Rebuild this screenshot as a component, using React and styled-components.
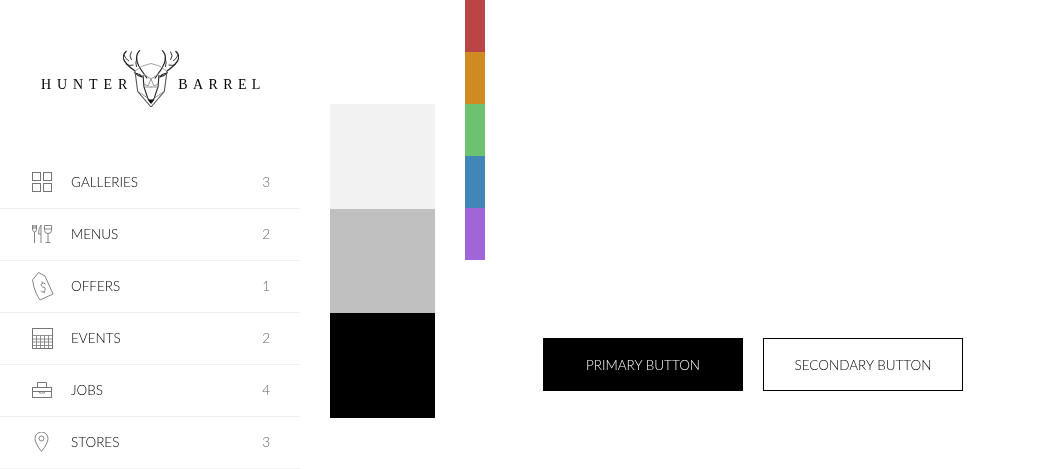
import React from 'react';
import styled, { createGlobalStyle } from 'styled-components';

const GlobalStyle = createGlobalStyle`
  html, body {
    margin: 0;
    padding: 0;
    background: #fff;
    font-family: Lato, "Open Sans", sans-serif;
    font-weight: 300;
  }
`;

const Page = styled.div`
  display: flex;
  align-items: flex-start;
  width: 1054px;
  height: 469px;
  overflow: hidden;
  will-change: transform;
`;

const Sidebar = styled.aside`
  width: 300px;
  flex-shrink: 0;
`;

const LogoWrap = styled.div`
  height: 157px;
  display: flex;
  align-items: flex-start;
  padding: 50px 0 0 41px;
  box-sizing: border-box;
`;

const LogoWord = styled.span`
  font-family: "Liberation Serif", serif;
  font-weight: 400;
  font-size: 14px;
  line-height: 16px;
  letter-spacing: ${props => props.spacing}px;
  color: #000;
  margin-top: 27px;
  white-space: nowrap;
`;

const Deer = styled.svg`
  width: 56px;
  height: 58px;
  margin: 0 -1px 0 -10px;
  flex-shrink: 0;
`;

const NavList = styled.ul`
  list-style: none;
  margin: 0;
  padding: 0;
`;

const NavRow = styled.li`
  height: 52px;
  box-sizing: border-box;
  border-bottom: 1px solid #f0f0f0;
  padding: 0 30px 1px 32px;
  display: flex;
  align-items: center;
`;

const IconSlot = styled.span`
  width: 39px;
  height: 32px;
  flex-shrink: 0;
  display: flex;
  align-items: center;
  color: #767676;
`;

const NavLabel = styled.span`
  flex: 1;
  font-size: 13.5px;
  color: #000;
`;

const NavCount = styled.span`
  font-size: 13.5px;
  color: #666;
`;

const Swatches = styled.div`
  margin: 104px 0 0 30px;
  width: 105px;
  flex-shrink: 0;
`;

const Swatch = styled.div`
  height: ${props => props.h}px;
  background: ${props => props.color};
`;

const Stripes = styled.div`
  margin-left: 30px;
  width: 20px;
  flex-shrink: 0;
`;

const Stripe = styled.div`
  height: 52px;
  background: ${props => props.color};
`;

const Buttons = styled.div`
  display: flex;
  gap: 20px;
  margin: 338px 0 0 58px;
`;

const Button = styled.button`
  width: 200px;
  height: 53px;
  box-sizing: border-box;
  border: 1px solid #000;
  border-radius: 0;
  padding: 0;
  background: ${props => props.primary ? '#000' : '#fff'};
  color: ${props => props.primary ? '#fff' : '#000'};
  font-family: inherit;
  font-weight: 300;
  font-size: 13.5px;
`;

const GridIcon = () => (
  <svg width="20" height="20" viewBox="0 0 20 20" fill="none" stroke="currentColor">
    <rect x="0.5" y="0.5" width="8" height="8" />
    <rect x="11.5" y="0.5" width="8" height="8" />
    <rect x="0.5" y="11.5" width="8" height="8" />
    <rect x="11.5" y="11.5" width="8" height="8" />
  </svg>
);

const MenuIcon = () => (
  <svg width="20" height="18" viewBox="0 0 20 18" fill="none" stroke="currentColor" strokeWidth="0.9">
    <path d="M0.5 0v4q0 2.500 2 3t2-3V0M1.800 0v4M3.200 0v4M2.500 7v11" />
    <path d="M9 18V0q-2.500 3-2.500 9H9" />
    <path d="M12.500 .5h7v5q0 3-3.500 3t-3.500-3zM12.500 4h7M16 8.500V17M13.500 17.500h5" />
  </svg>
);

const TagIcon = () => (
  <svg width="22" height="30" viewBox="0 0 22 30" fill="none" stroke="currentColor" strokeWidth="0.9">
    <path d="M0.500 9L6.500 1.500 13 5l8 18-13 6q-2-3-4-7-2.500-6-3.500-13z" strokeLinejoin="round" />
    <path d="M13.500 13q-2-1.500-3.500-.5t-.500 2.500 2.800 1.500.5 3.200-3.800 0M9.800 10.500l.5 1.800M12 20l.5 1.800" />
  </svg>
);

const CalendarIcon = () => (
  <svg width="21" height="21" viewBox="0 0 21 21" fill="none" stroke="currentColor">
    <rect x="0.5" y="0.5" width="20" height="20" />
    <path d="M1 7.500h19M1 11h19M1 14h19M1 17.500h19M4.500 8v12M8.500 8v12M12.500 8v12M16.500 8v12" strokeWidth="0.8" />
  </svg>
);

const CaseIcon = () => (
  <svg width="20" height="16" viewBox="0 0 20 16" fill="none" stroke="currentColor">
    <rect x="0.5" y="5.500" width="19" height="10" />
    <path d="M5.500 5V.5h9V5M.5 9.500h19" />
    <path d="M7.500 9.500v1.500h5V9.500" strokeWidth="0.8" />
  </svg>
);

const PinIcon = () => (
  <svg width="22" height="20" viewBox="0 0 22 20" fill="none" stroke="currentColor" strokeWidth="0.9">
    <path d="M9.500 19.500Q3 11 3 6.500a6.500 6.500 0 0 1 13 0Q16 11 9.500 19.500z" />
    <circle cx="9.500" cy="6.500" r="2.500" />
  </svg>
);

const DeerHalf = () => (
  <g>
    <path d="M17 .3Q13 4 13.700 9.500q.8 6 7 14l3.500 5" strokeWidth="1.200" />
    <path d="M3.500 1Q-.8 5 .6 9q1.500 5 11.400 12" strokeWidth="1.200" />
    <path d="M8.500 1.500Q5.500 6 8.500 10M1 5q1.500 4 5 6M3.500 14.500q3 1.500 7 .5M14 8q-2 4-.5 9" />
    <path d="M12 23q2.500 3 7 4-1.500-3-7-4z" strokeWidth="1.100" />
    <path d="M12 21Q20 14.500 28 13.500" stroke="#999" />
    <path d="M12 21l2.700 20.500L28 57" stroke="#555" strokeWidth="1.100" />
    <path d="M20 25l1 12 3.700 11L28 53" strokeWidth="1.100" />
    <path d="M20.500 24L28 29l-3 7-4-2M24.500 48L15 41.500M21.500 37l7 0" stroke="#888" />
  </g>
);

const DeerLogo = () => (
  <Deer viewBox="0 0 56 58" fill="none" stroke="#222" strokeWidth="0.9">
    <DeerHalf />
    <g transform="matrix(-1 0 0 1 56 0)">
      <DeerHalf />
    </g>
    <path d="M24.500 49.500h7L28 54z" fill="#111" stroke="none" />
  </Deer>
);

const navItems = [
  { label: 'GALLERIES', count: 3, icon: <GridIcon /> },
  { label: 'MENUS', count: 2, icon: <MenuIcon /> },
  { label: 'OFFERS', count: 1, icon: <TagIcon /> },
  { label: 'EVENTS', count: 2, icon: <CalendarIcon /> },
  { label: 'JOBS', count: 4, icon: <CaseIcon /> },
  { label: 'STORES', count: 3, icon: <PinIcon /> },
];

const greys = [
  { color: '#f2f2f2', h: 105 },
  { color: '#c0c0c0', h: 104 },
  { color: '#000000', h: 105 },
];

const stripes = ['#b94545', '#cf8a22', '#6cc271', '#4286b8', '#a265d8'];

const App = () => {
  return (
    <Page>
      <GlobalStyle />
      <Sidebar>
        <LogoWrap>
          <LogoWord spacing={5.9}>HUNTER</LogoWord>
          <DeerLogo />
          <LogoWord spacing={5.4}>BARREL</LogoWord>
        </LogoWrap>
        <NavList>
          {navItems.map(item => (
            <NavRow key={item.label}>
              <IconSlot>{item.icon}</IconSlot>
              <NavLabel>{item.label}</NavLabel>
              <NavCount>{item.count}</NavCount>
            </NavRow>
          ))}
        </NavList>
      </Sidebar>
      <Swatches>
        {greys.map(g => <Swatch key={g.color} color={g.color} h={g.h} />)}
      </Swatches>
      <Stripes>
        {stripes.map(c => <Stripe key={c} color={c} />)}
      </Stripes>
      <Buttons>
        <Button primary>PRIMARY BUTTON</Button>
        <Button>SECONDARY BUTTON</Button>
      </Buttons>
    </Page>
  );
};

export default App;
